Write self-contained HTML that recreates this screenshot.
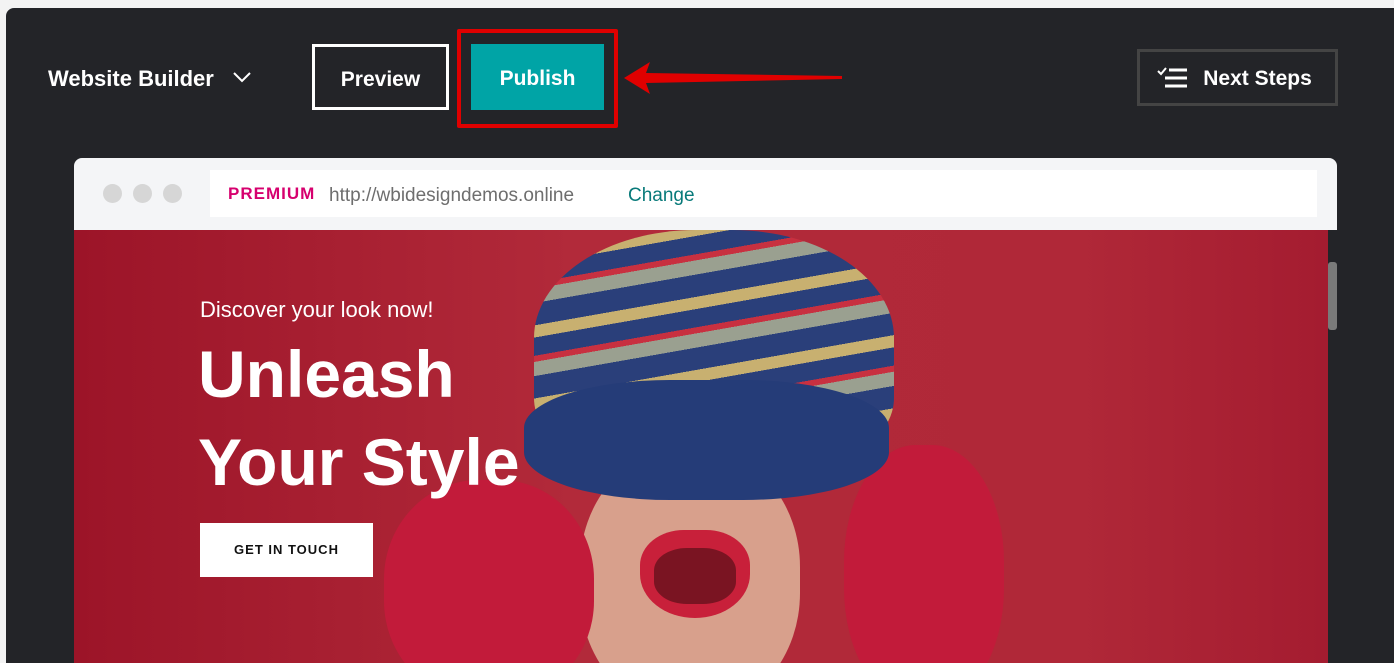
<!DOCTYPE html>
<html><head><style>
html,body{margin:0;width:1394px;height:663px;overflow:hidden}
body{background:#f3f3f3;font-family:"Liberation Sans",sans-serif;position:relative}
.panel{position:absolute;left:6px;top:8px;width:1388px;height:655px;background:#232428;border-radius:8px 0 0 0}
.abs{position:absolute}
.wb{left:48px;top:66px;color:#fff;font-size:22px;font-weight:bold}
.btn{color:#fff;font-size:21px;font-weight:bold;text-align:center;box-sizing:border-box}
</style></head><body>
<div class="panel"></div>
<div class="abs wb">Website Builder</div>
<svg class="abs" style="left:232px;top:70px" width="20" height="14"><path d="M2 3 L10 11 L18 3" stroke="#fff" stroke-width="2" fill="none"/></svg>
<div class="abs btn" style="left:312px;top:44px;width:137px;height:66px;border:3px solid #fff;line-height:66px">Preview</div>
<div class="abs" style="left:457px;top:29px;width:161px;height:99px;border:4px solid #e00000;box-sizing:border-box;border-radius:2px"></div>
<div class="abs btn" style="left:471px;top:44px;width:133px;height:66px;background:#00a4a6;line-height:70px">Publish</div>
<svg class="abs" style="left:620px;top:58px" width="225" height="40"><path d="M4 20 L30 4 L26 15 L222 18 L222 21 L26 25 L30 36 Z" fill="#e00000"/></svg>
<div class="abs btn" style="left:1137px;top:49px;width:201px;height:57px;border:3px solid #444;line-height:54px;padding-left:40px">Next Steps</div>
<svg class="abs" style="left:1157px;top:66px" width="32" height="24"><path d="M1 5 L4 8 L9 2" stroke="#fff" stroke-width="2" fill="none"/><path d="M12 4 H30 M8 12 H30 M8 20 H30" stroke="#fff" stroke-width="3"/></svg>
<div class="abs" style="left:74px;top:158px;width:1263px;height:72px;background:#f4f5f7;border-radius:8px 8px 0 0"></div>
<div class="abs" style="left:103px;top:184px;width:19px;height:19px;border-radius:50%;background:#d6d6d6"></div>
<div class="abs" style="left:133px;top:184px;width:19px;height:19px;border-radius:50%;background:#d6d6d6"></div>
<div class="abs" style="left:163px;top:184px;width:19px;height:19px;border-radius:50%;background:#d6d6d6"></div>
<div class="abs" style="left:210px;top:170px;width:1107px;height:47px;background:#fff"></div>
<div class="abs" style="left:228px;top:184px;font-size:17px;font-weight:bold;color:#d6006e;letter-spacing:1px">PREMIUM</div>
<div class="abs" style="left:329px;top:185px;font-size:19px;color:#6e6e6e">http://wbidesigndemos.online</div>
<div class="abs" style="left:628px;top:185px;font-size:19px;color:#087a7a">Change</div>
<div class="abs" style="left:74px;top:230px;width:1254px;height:433px;background:linear-gradient(90deg,#9c1428 0%,#b22a3a 40%,#b02838 80%,#a41c30 100%);overflow:hidden">
 <div class="abs" style="left:506px;top:220px;width:220px;height:260px;border-radius:45%;background:#d8a08c"></div>
 <div class="abs" style="left:310px;top:250px;width:210px;height:220px;border-radius:45%;background:#c21b3a"></div>
 <div class="abs" style="left:770px;top:215px;width:160px;height:260px;border-radius:45%;background:#c21b3a"></div>
 <div class="abs" style="left:460px;top:0;width:360px;height:240px;border-radius:45% 45% 30% 30%;background:repeating-linear-gradient(170deg,#2a3f7a 0 22px,#c8b070 22px 34px,#2a3f7a 34px 52px,#c83040 52px 58px,#9aa090 58px 72px)"></div>
 <div class="abs" style="left:450px;top:150px;width:365px;height:120px;border-radius:40%;background:#253c78"></div>
 <div class="abs" style="left:566px;top:300px;width:110px;height:88px;border-radius:40% 40% 50% 50%;background:#c8203a"></div>
 <div class="abs" style="left:580px;top:318px;width:82px;height:56px;border-radius:40%;background:#7a1422"></div>
</div>
<div class="abs" style="left:1328px;top:230px;width:9px;height:433px;background:#232428"></div>
<div class="abs" style="left:1328px;top:262px;width:9px;height:68px;background:#7a7a7a;border-radius:3px"></div>
<div class="abs" style="left:200px;top:297px;font-size:22px;color:#fff">Discover your look now!</div>
<div class="abs" style="left:198px;top:330px;font-size:66px;font-weight:bold;color:#fff;line-height:88px;letter-spacing:0px">Unleash<br>Your Style</div>
<div class="abs" style="left:200px;top:523px;width:173px;height:54px;background:#fff;font-size:13px;font-weight:bold;letter-spacing:1px;line-height:54px;text-align:center;color:#111">GET IN TOUCH</div>
</body></html>
